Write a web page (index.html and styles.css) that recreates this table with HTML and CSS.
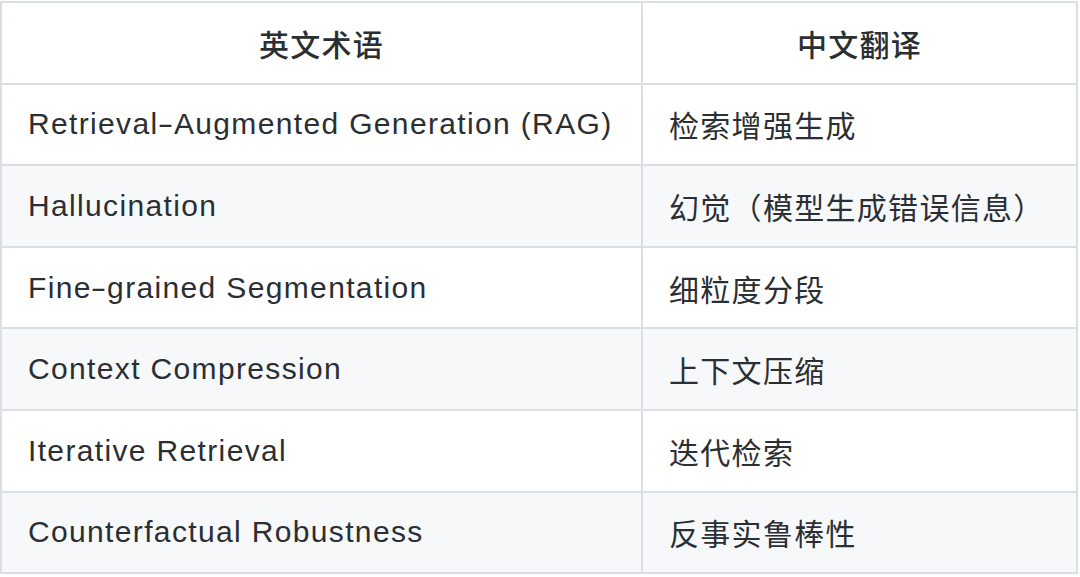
FILE: index.html
```html
<!DOCTYPE html>
<html lang="zh-CN">
<head>
<meta charset="utf-8">
<title>术语表</title>
<link rel="stylesheet" href="styles.css">
</head>
<body>
<table class="terms">
  <colgroup><col class="col-en"><col class="col-zh"></colgroup>
  <thead>
    <tr><th>英文术语</th><th>中文翻译</th></tr>
  </thead>
  <tbody>
    <tr><td class="en">Retrieval<span class="hy">-</span>Augmented Generation (RAG)</td><td class="zh">检索增强生成</td></tr>
    <tr><td class="en">Hallucination</td><td class="zh">幻觉（模型生成错误信息）</td></tr>
    <tr><td class="en">Fine<span class="hy">-</span>grained Segmentation</td><td class="zh">细粒度分段</td></tr>
    <tr><td class="en">Context Compression</td><td class="zh">上下文压缩</td></tr>
    <tr><td class="en">Iterative Retrieval</td><td class="zh">迭代检索</td></tr>
    <tr><td class="en">Counterfactual Robustness</td><td class="zh">反事实鲁棒性</td></tr>
  </tbody>
</table>
</body>
</html>
```
FILE: styles.css
```css
html, body {
  margin: 0;
  padding: 0;
  background: #ffffff;
}
body {
  padding-top: 1px;
  font-family: "Liberation Sans", "Noto Sans CJK SC", sans-serif;
  color: #2b2f33;
}
.terms {
  border-collapse: collapse;
  width: 1078px;
  table-layout: fixed;
}
.col-en { width: 641px; }
.terms th,
.terms td {
  border: 2px solid #dadfe4;
  height: 79.6px;
  padding: 0 26px;
  vertical-align: middle;
  white-space: nowrap;
}
.terms th {
  font-family: "Noto Sans CJK SC", sans-serif;
  font-size: 30px;
  font-weight: 500;
  letter-spacing: 1.3px;
  text-align: center;
  background: #ffffff;
}
.terms td {
  font-weight: normal;
  text-align: left;
}
.terms td.en {
  font-size: 30px;
  letter-spacing: 1.35px;
}
.terms td.en .hy {
  display: inline-block;
  transform: scaleX(1.6);
  margin: 0 2px;
}
.terms td.zh {
  font-family: "Noto Sans CJK SC", sans-serif;
  font-size: 30px;
  letter-spacing: 1.3px;
}
.terms tbody tr:nth-child(even) td {
  background: #f6f8fa;
}
```
